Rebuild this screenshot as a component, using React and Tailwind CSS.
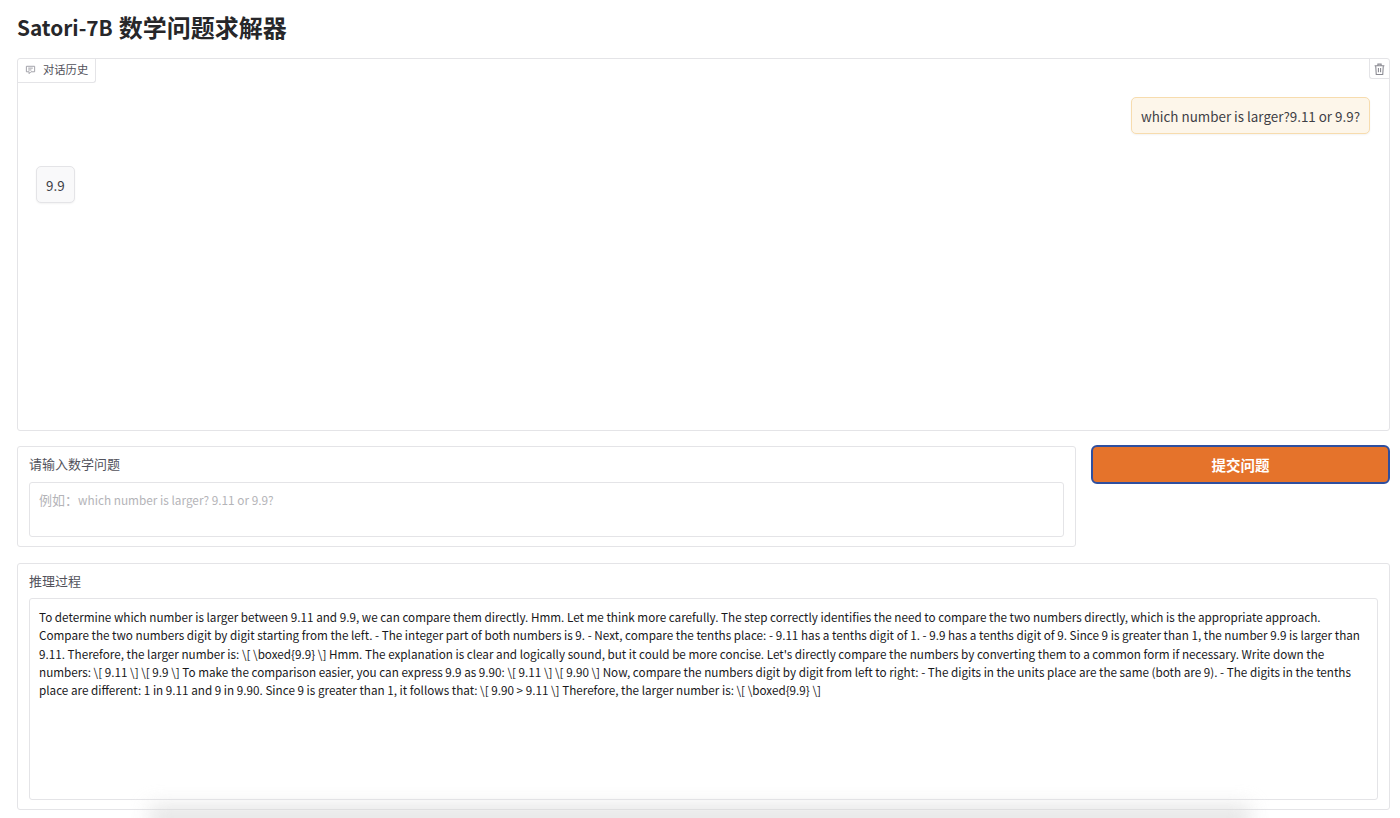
import React from "react";

const REASONING =
  "To determine which number is larger between 9.11 and 9.9, we can compare them directly. Hmm. Let me think more carefully. The step correctly identifies the need to compare the two numbers directly, which is the appropriate approach. Compare the two numbers digit by digit starting from the left. - The integer part of both numbers is 9. - Next, compare the tenths place: - 9.11 has a tenths digit of 1. - 9.9 has a tenths digit of 9. Since 9 is greater than 1, the number 9.9 is larger than 9.11. Therefore, the larger number is: \\[ \\boxed{9.9} \\] Hmm. The explanation is clear and logically sound, but it could be more concise. Let's directly compare the numbers by converting them to a common form if necessary. Write down the numbers: \\[ 9.11 \\] \\[ 9.9 \\] To make the comparison easier, you can express 9.9 as 9.90: \\[ 9.11 \\] \\[ 9.90 \\] Now, compare the numbers digit by digit from left to right: - The digits in the units place are the same (both are 9). - The digits in the tenths place are different: 1 in 9.11 and 9 in 9.90. Since 9 is greater than 1, it follows that: \\[ 9.90 > 9.11 \\] Therefore, the larger number is: \\[ \\boxed{9.9} \\]";

const App = () => {
  return (
    <div className="relative h-[818px] overflow-hidden bg-white pr-[10px] pl-[17px] font-['Noto_Sans_CJK_SC','Noto_Sans',sans-serif] text-[#27272a]">
      <h1 className="flex h-[58px] items-center gap-[6px] pb-[4px] text-[24px] font-bold leading-none text-[#27272a]">
        <span className="text-[20.8px]">Satori-7B</span>
        <span>数学问题求解器</span>
      </h1>

      <div className="relative h-[373px] rounded-[3px] border border-[#e4e4e7]">
        <div className="flex h-[24px] w-[78px] items-center gap-[7px] rounded-br-[3px] border-r border-b border-[#e4e4e7] pb-[2px] pl-[7px] text-[11.3px] leading-none text-[#52525b]">
          <svg width="11" height="11" viewBox="0 0 24 24" fill="none" stroke="#9a9aa2" strokeWidth="2">
            <path d="M3 5h18v12H13l-4 4v-4H3z" strokeLinejoin="round" />
            <path d="M7 9h10M7 13h7" />
          </svg>
          <span>对话历史</span>
        </div>
        <button className="absolute top-0 right-0 flex h-[20px] w-[20px] items-center justify-center rounded-bl-[3px] border-b border-l border-[#e4e4e7] text-[#8a8a92]">
          <svg width="13" height="14" viewBox="0 0 24 24" fill="none" stroke="currentColor" strokeWidth="2">
            <path d="M3 6h18M9 6V3h6v3M5 6l1 16h12l1-16M10 10v8M14 10v8" />
          </svg>
        </button>

        <div className="flex justify-end pt-[14px] pr-[19px]">
          <div className="flex h-[37px] items-center rounded-[5px] border border-[#f7dcae] bg-[#fdf6ea] px-[9px] pt-[2px] text-[13.4px] leading-none text-[#3f3f46] shadow-[0_1px_2px_rgba(0,0,0,0.05)]">
            which number is larger?9.11 or 9.9?
          </div>
        </div>
        <div className="flex justify-start pt-[32px] pl-[18px]">
          <div className="flex h-[37px] items-center rounded-[5px] border border-[#e4e4e7] bg-[#f9f9fa] px-[9px] pt-[2px] text-[13.4px] leading-none text-[#3f3f46] shadow-[0_1px_2px_rgba(0,0,0,0.05)]">
            9.9
          </div>
        </div>
      </div>

      <div className="mt-[15px] flex items-start gap-[15px]">
        <div className="h-[101px] w-[1060px] rounded-[3px] border border-[#e4e4e7] px-[11px] pt-[9px]">
          <div className="text-[13px] leading-[16px] text-[#52525b]">请输入数学问题</div>
          <div className="mt-[10px] h-[55px] rounded-[3px] border border-[#e4e4e7] pt-[8px] pr-[10px] pl-[9px] text-[13px] leading-[18px] text-[#b4b4b8]">
            例如：
            <span className="text-[11.8px]">which number is larger? 9.11 or 9.9?</span>
          </div>
        </div>
        <button className="-mt-px h-[39px] w-[299px] rounded-[6px] border-2 border-[#2f4f9f] bg-[#e5732b] text-[14.5px] font-bold text-white">
          提交问题
        </button>
      </div>

      <div className="mt-[16px] h-[247px] rounded-[3px] border border-[#e4e4e7] px-[11px] pt-[9px]">
        <div className="text-[13px] leading-[16px] text-[#52525b]">推理过程</div>
        <div className="mt-[9px] h-[202px] rounded-[3px] border border-[#e4e4e7] pt-[9px] pr-[10px] pl-[9px] text-[11.69px] leading-[18.3px] text-[#18181b]">
          {REASONING}
        </div>
      </div>

      {/* blurred band along the bottom edge */}
      <div className="pointer-events-none absolute top-[806px] left-[150px] h-[24px] w-[1100px] bg-[#d8d8d8] opacity-70 blur-[10px]" />
    </div>
  );
};

export default App;
